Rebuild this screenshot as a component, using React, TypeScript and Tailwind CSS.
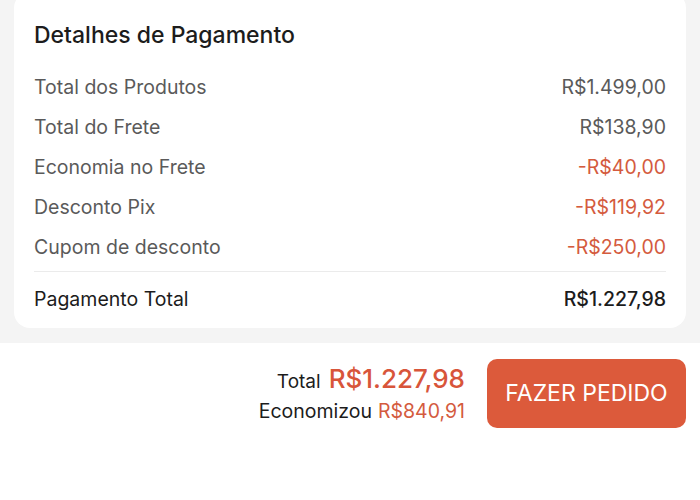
const rows = [
  { label: "Total dos Produtos", value: "R$1.499,00", discount: false },
  { label: "Total do Frete", value: "R$138,90", discount: false },
  { label: "Economia no Frete", value: "-R$40,00", discount: true },
  { label: "Desconto Pix", value: "-R$119,92", discount: true },
  { label: "Cupom de desconto", value: "-R$250,00", discount: true },
]

export default function App() {
  return (
    <div className="w-[700px] h-[500px] overflow-hidden bg-white font-['Inter',sans-serif]">
      {/* Payment details */}
      <div className="bg-[#f4f4f4] px-[14px] pb-[15px]">
        <div className="-mt-2 rounded-2xl bg-white px-5 pt-[29px] pb-[8px]">
          <h2 className="h-7 text-[23px] leading-7 font-medium text-[#1c1c1c]">Detalhes de Pagamento</h2>
          <ul className="mt-[19px]">
            {rows.map((row) => (
              <li key={row.label} className="flex h-10 items-center justify-between text-[19.5px]">
                <span className="text-[#5a5a5a]">{row.label}</span>
                <span className={row.discount ? "text-[#d45b3e]" : "text-[#5a5a5a]"}>{row.value}</span>
              </li>
            ))}
          </ul>
          <div className="mt-[3px] h-px bg-[#ebebeb]" />
          <div className="mt-[8px] flex h-10 items-center justify-between text-[19.5px] text-[#1c1c1c]">
            <span>Pagamento Total</span>
            <span className="font-medium">R$1.227,98</span>
          </div>
        </div>
      </div>

      {/* Bottom bar */}
      <div className="flex items-center justify-end gap-[22px] px-[14px] pt-[16px]">
        <div className="flex flex-col items-end">
          <div className="flex h-8 items-baseline gap-2">
            <span className="text-[19px] text-[#1c1c1c]">Total</span>
            <span className="text-[26px] leading-8 font-medium text-[#d8553a]">R$1.227,98</span>
          </div>
          <div className="mt-[2px] flex h-7 items-baseline gap-[6px] text-[19.5px] leading-7">
            <span className="text-[#1c1c1c]">Economizou</span>
            <span className="text-[#d45b3e]">R$840,91</span>
          </div>
        </div>
        <button
          type="button"
          className="h-[69px] w-[199px] rounded-[10px] bg-[#dc5a3b] text-[23px] text-white"
        >
          FAZER PEDIDO
        </button>
      </div>
    </div>
  )
}
